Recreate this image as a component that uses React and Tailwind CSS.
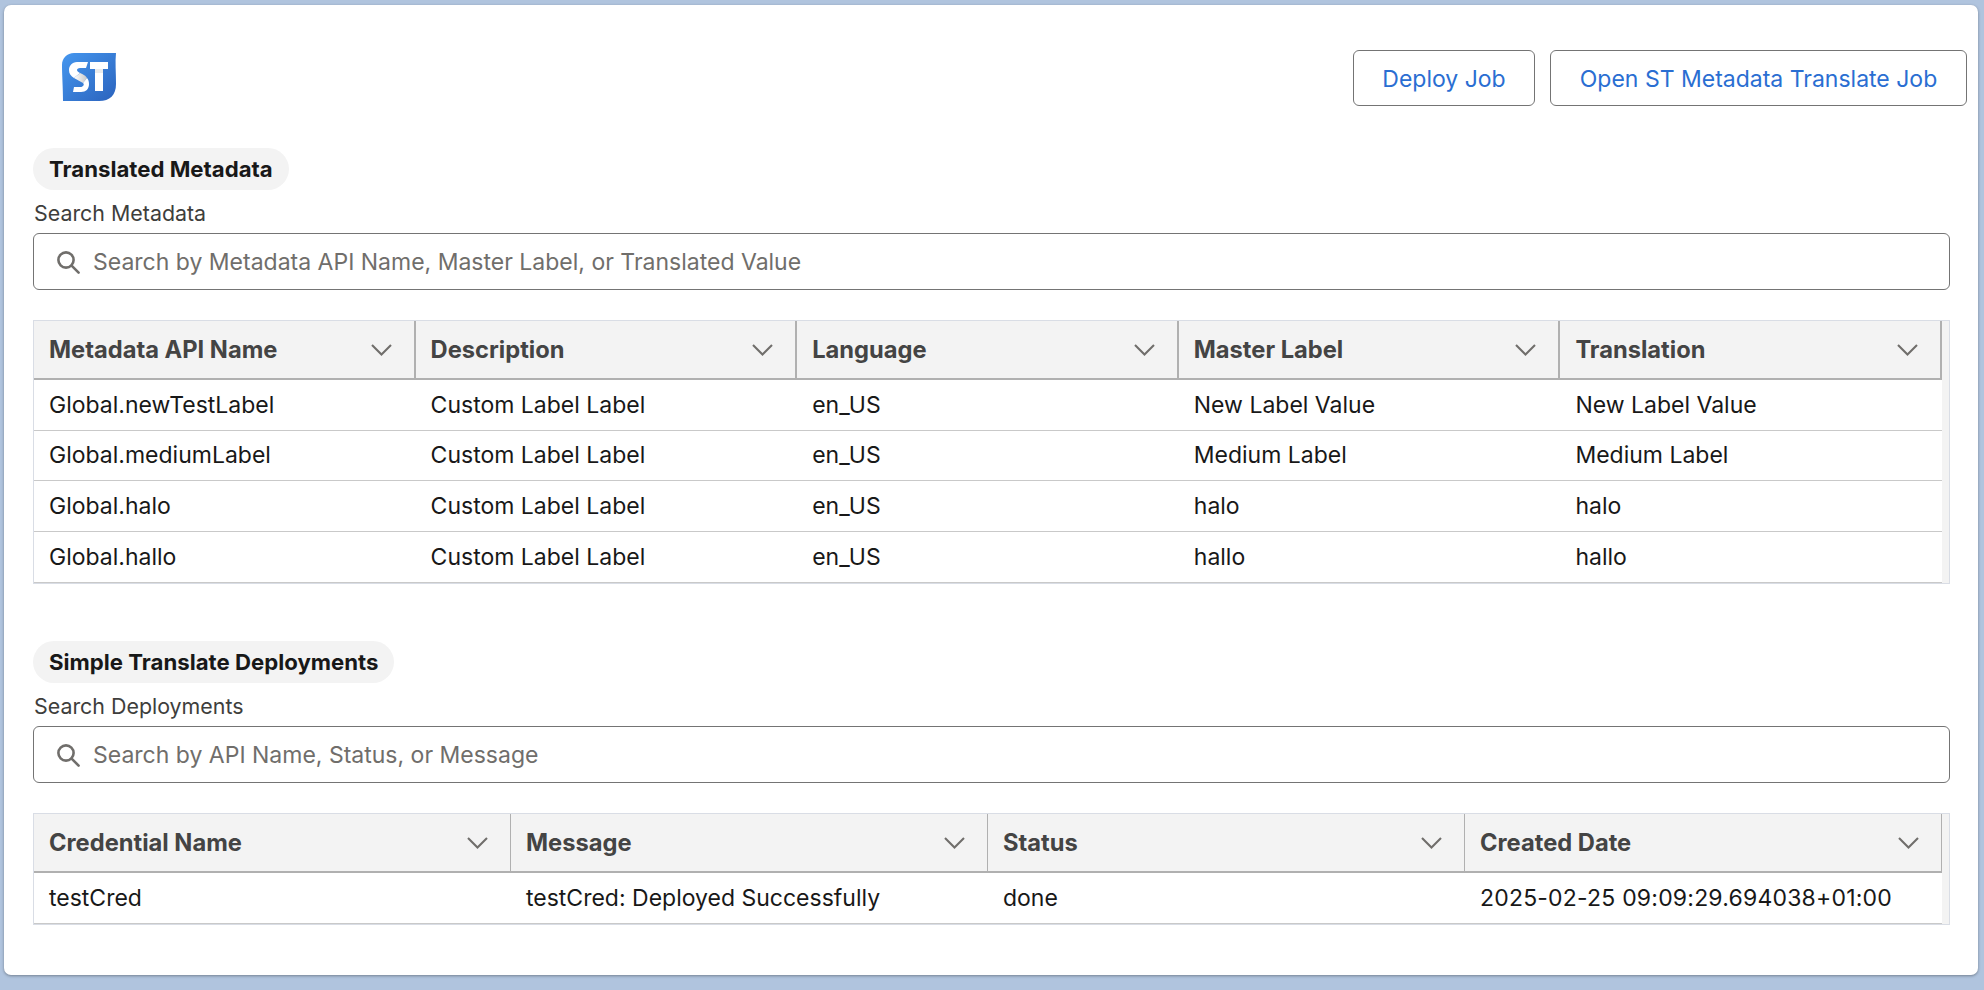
import React from "react";

const FONT = "font-['Inter','Liberation_Sans',sans-serif]";

function Logo() {
  return (
    <svg width="56" height="50" viewBox="0 0 56 50" className="block">
      <defs>
        <linearGradient id="lg" x1="0" y1="0" x2="1" y2="1">
          <stop offset="0" stopColor="#4597ef" />
          <stop offset="1" stopColor="#2b63bd" />
        </linearGradient>
        <linearGradient id="fold" x1="0" y1="0" x2="1" y2="0">
          <stop offset="0" stopColor="#ffffff" />
          <stop offset="1" stopColor="#c9c9c9" />
        </linearGradient>
      </defs>
      <path d="M13 1H55C54 10 55 20 55 32C55 43 49 49 38 49H2C2 35 1 24 1 13C1 6 6 1 13 1Z" fill="url(#lg)" />
      <path d="M27 10H16C11 10 8 14 8 18C8 22 10 24 13 26L19 21C17 20 16 19 16 18C16 17 17 16 19 16H25Z" fill="#fff" />
      <path d="M19 21L13 26L22 31L26 26C25 24 22 22 19 21Z" fill="url(#fold)" />
      <path d="M22 31C23 32 23 33 22 34C21 35 20 35 18 35H13L12 40H20C25 40 28 37 28 32C28 29 27 27 26 26Z" fill="#fff" />
      <path d="M29 10H47V17H42V39H34V17H29Z" fill="#fff" />
      <path d="M34 17H42V21H34Z" fill="#dedede" opacity="0.6" />
    </svg>
  );
}

function SearchIcon() {
  return (
    <svg width="24" height="24" viewBox="0 0 24 24" fill="none" stroke="#706e6b" strokeWidth="2.6" className="block shrink-0">
      <circle cx="10" cy="10" r="7.6" />
      <path d="M15.6 15.6L22.6 22.6" strokeLinecap="round" />
    </svg>
  );
}

function Chevron() {
  return (
    <svg width="21" height="12" viewBox="0 0 21 12" fill="none" stroke="#706e6b" strokeWidth="2.1" className="block shrink-0">
      <path d="M1 1L10.5 10.5L20 1" />
    </svg>
  );
}

function Pill({ children }) {
  return (
    <div className="h-[42px] w-fit rounded-[21px] bg-[#f3f3f3] pl-4 pr-4 flex items-center text-[22.2px] font-bold text-[#181818]">
      {children}
    </div>
  );
}

function Search({ label, placeholder }) {
  return (
    <div>
      <div className="h-[43px] flex items-center pt-[3px] pl-px text-[21.4px] text-[#3e3e3c]">{label}</div>
      <div className="h-[57px] w-[1917px] rounded-[6px] border border-[#747474] bg-white flex items-center pl-[22px] gap-[13px]">
        <SearchIcon />
        <span className="pt-[2px] text-[23px] text-[#706e6b]">{placeholder}</span>
      </div>
    </div>
  );
}

function Table({ cols, rows, heavy, rowHeights }) {
  return (
    <div className="w-[1917px] border border-[#d9dde5] bg-[#f3f3f3] pr-[7px]">
      <div className="flex h-[59px] bg-[#f3f3f3] border-b-2 border-[#b0b0b0]">
        {cols.map((c) => (
          <div
            key={c}
            className={
              "flex-1 flex items-center justify-between pt-px pl-[15px] pr-[22px] text-[23.7px] font-bold text-[#444444] border-[#b0b0b0] " +
              (heavy ? "border-r-2" : "border-r")
            }
          >
            <span>{c}</span>
            <Chevron />
          </div>
        ))}
      </div>
      {rows.map((r, i) => (
        <div key={i} style={{ height: rowHeights[i] }} className="flex bg-white border-b border-[#c9c9c9]">
          {r.map((t, j) => (
            <div key={j} className="flex-1 flex items-center pl-[15px] text-[23px] text-[#181818]">
              {t}
            </div>
          ))}
        </div>
      ))}
    </div>
  );
}

export default function App() {
  return (
    <div className={"h-[990px] overflow-hidden bg-[#b0c4de] pt-[5px] pl-[4px] " + FONT}>
      <div className="w-[1974px] h-[970px] rounded-[7px] bg-white shadow-[0_1px_3px_rgba(0,0,0,0.35)] pl-[29px] pr-[11px]">
        <div className="h-[143px] flex items-start justify-between pt-[45px]">
          <div className="pl-[28px] pt-[2px]">
            <Logo />
          </div>
          <div className="flex gap-[15px] text-[23px] text-[#2a6ed2]">
            <button className="h-[56px] w-[182px] rounded-[6px] border border-[#747474] bg-white pt-[3px]">Deploy Job</button>
            <button className="h-[56px] w-[417px] rounded-[6px] border border-[#747474] bg-white pt-[3px]">Open ST Metadata Translate Job</button>
          </div>
        </div>
        <Pill>Translated Metadata</Pill>
        <Search label="Search Metadata" placeholder="Search by Metadata API Name, Master Label, or Translated Value" />
        <div className="mt-[30px]">
          <Table
            heavy
            cols={["Metadata API Name", "Description", "Language", "Master Label", "Translation"]}
            rowHeights={[51, 50, 51, 51]}
            rows={[
              ["Global.newTestLabel", "Custom Label Label", "en_US", "New Label Value", "New Label Value"],
              ["Global.mediumLabel", "Custom Label Label", "en_US", "Medium Label", "Medium Label"],
              ["Global.halo", "Custom Label Label", "en_US", "halo", "halo"],
              ["Global.hallo", "Custom Label Label", "en_US", "hallo", "hallo"],
            ]}
          />
        </div>
        <div className="mt-[57px]">
          <Pill>Simple Translate Deployments</Pill>
        </div>
        <Search label="Search Deployments" placeholder="Search by API Name, Status, or Message" />
        <div className="mt-[30px]">
          <Table
            cols={["Credential Name", "Message", "Status", "Created Date"]}
            rowHeights={[51]}
            rows={[["testCred", "testCred: Deployed Successfully", "done", <span key="d" className="tracking-[0.2px]">2025-02-25 09:09:29.694038+01:00</span>]]}
          />
        </div>
      </div>
    </div>
  );
}
